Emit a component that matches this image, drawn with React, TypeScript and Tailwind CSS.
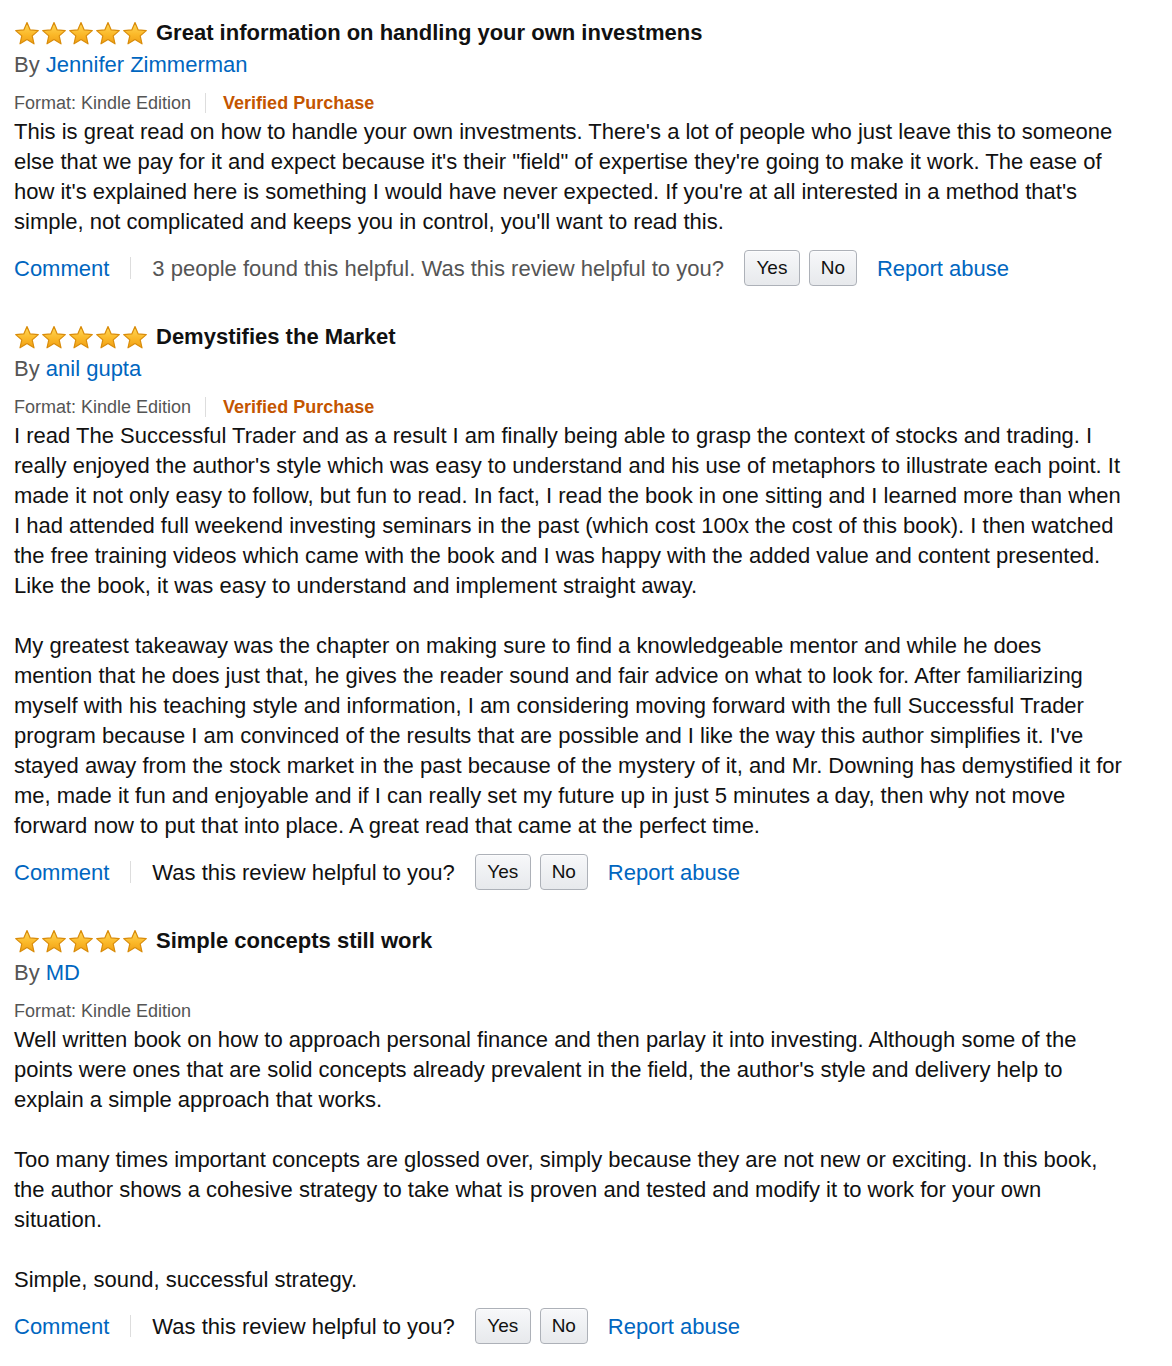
import React from 'react';

interface Review {
  title: string;
  author: string;
  verified: boolean;
  paragraphs: string[];
  helpful?: string;
}

const reviews: Review[] = [
  {
    title: 'Great information on handling your own investmens',
    author: 'Jennifer Zimmerman',
    verified: true,
    paragraphs: [
      'This is great read on how to handle your own investments. There\'s a lot of people who just leave this to someone else that we pay for it and expect because it\'s their "field" of expertise they\'re going to make it work. The ease of how it\'s explained here is something I would have never expected. If you\'re at all interested in a method that\'s simple, not complicated and keeps you in control, you\'ll want to read this.',
    ],
    helpful: '3 people found this helpful.',
  },
  {
    title: 'Demystifies the Market',
    author: 'anil gupta',
    verified: true,
    paragraphs: [
      "I read The Successful Trader and as a result I am finally being able to grasp the context of stocks and trading. I really enjoyed the author's style which was easy to understand and his use of metaphors to illustrate each point. It made it not only easy to follow, but fun to read. In fact, I read the book in one sitting and I learned more than when I had attended full weekend investing seminars in the past (which cost 100x the cost of this book). I then watched the free training videos which came with the book and I was happy with the added value and content presented. Like the book, it was easy to understand and implement straight away.",
      "My greatest takeaway was the chapter on making sure to find a knowledgeable mentor and while he does mention that he does just that, he gives the reader sound and fair advice on what to look for. After familiarizing myself with his teaching style and information, I am considering moving forward with the full Successful Trader program because I am convinced of the results that are possible and I like the way this author simplifies it. I've stayed away from the stock market in the past because of the mystery of it, and Mr. Downing has demystified it for me, made it fun and enjoyable and if I can really set my future up in just 5 minutes a day, then why not move forward now to put that into place. A great read that came at the perfect time.",
    ],
  },
  {
    title: 'Simple concepts still work',
    author: 'MD',
    verified: false,
    paragraphs: [
      "Well written book on how to approach personal finance and then parlay it into investing. Although some of the points were ones that are solid concepts already prevalent in the field, the author's style and delivery help to explain a simple approach that works.",
      'Too many times important concepts are glossed over, simply because they are not new or exciting. In this book, the author shows a cohesive strategy to take what is proven and tested and modify it to work for your own situation.',
      'Simple, sound, successful strategy.',
    ],
  },
];

const Star: React.FC<{ id: string }> = ({ id }) => (
  <svg width="26" height="25" viewBox="0 0 26 25" className="block">
    <defs>
      <linearGradient id={id} x1="0" y1="0" x2="0" y2="1">
        <stop offset="0" stopColor="#ffd95a" />
        <stop offset="0.55" stopColor="#fbb92a" />
        <stop offset="1" stopColor="#f0a014" />
      </linearGradient>
    </defs>
    <path
      d="M13 1.6 L16.2 8.9 L24.3 9.6 L18.2 14.9 L20.0 22.8 L13 18.6 L6.0 22.8 L7.8 14.9 L1.7 9.6 L9.8 8.9 Z"
      fill={`url(#${id})`}
      stroke="#d98c0a"
      strokeWidth="1.2"
      strokeLinejoin="round"
    />
  </svg>
);

const Stars: React.FC<{ k: number }> = ({ k }) => (
  <div className="flex items-center gap-[1px]">
    {[0, 1, 2, 3, 4].map((i) => (
      <Star key={i} id={`star-${k}-${i}`} />
    ))}
  </div>
);

const VoteButton: React.FC<{ label: string; w: string }> = ({ label, w }) => (
  <button
    className={`${w} h-[36px] rounded-[4px] border border-[#adb1b8] bg-gradient-to-b from-[#f7f8fa] to-[#e7e9ec] text-[19px] text-[#111] shadow-[inset_0_1px_0_rgba(255,255,255,0.6)]`}
  >
    {label}
  </button>
);

const ReviewBlock: React.FC<{ r: Review; k: number }> = ({ r, k }) => (
  <div className={k === 0 ? '' : 'mt-[36px]'}>
    <div className="flex items-center h-[30px]">
      <Stars k={k} />
      <h3 className="ml-[8px] text-[22px] font-bold text-[#111] leading-[30px]">{r.title}</h3>
    </div>
    <div className="mt-[2px] text-[22px] leading-[30px] text-[#555]">
      By <a className="text-[#0066c0]">{r.author}</a>
    </div>
    <div className="mt-[11px] flex items-center h-[24px] text-[18px] leading-[24px] text-[#555]">
      <span>Format: Kindle Edition</span>
      {r.verified && (
        <>
          <span className="ml-[14px] mr-[17px] w-px h-[20px] bg-[#ddd]" />
          <span className="font-bold text-[#c45500]">Verified Purchase</span>
        </>
      )}
    </div>
    <div className="mt-[2px] text-[22px] leading-[30px] text-[#111]">
      {r.paragraphs.map((p, i) => (
        <p key={i} className={i === 0 ? '' : 'mt-[30px]'}>
          {p}
        </p>
      ))}
    </div>
    <div className="mt-[13px] flex items-center h-[36px] text-[22px]">
      <a className="text-[#0066c0]">Comment</a>
      <span className="mx-[21px] w-px h-[22px] bg-[#ddd]" />
      {r.helpful ? (
        <span className="text-[#555]">{r.helpful} Was this review helpful to you?</span>
      ) : (
        <span className="text-[#111]">Was this review helpful to you?</span>
      )}
      <div className="ml-[20px] flex gap-[9px]">
        <VoteButton label="Yes" w="w-[56px]" />
        <VoteButton label="No" w="w-[48px]" />
      </div>
      <a className="ml-[20px] text-[#0066c0]">Report abuse</a>
    </div>
  </div>
);

export default function App() {
  return (
    <div className="bg-white min-h-[1366px] pt-[18px] pl-[14px] w-[1172px] font-['Liberation_Sans',Arial,sans-serif]">
      <div className="w-[1109px]">
        {reviews.map((r, i) => (
          <ReviewBlock key={i} r={r} k={i} />
        ))}
      </div>
    </div>
  );
}
